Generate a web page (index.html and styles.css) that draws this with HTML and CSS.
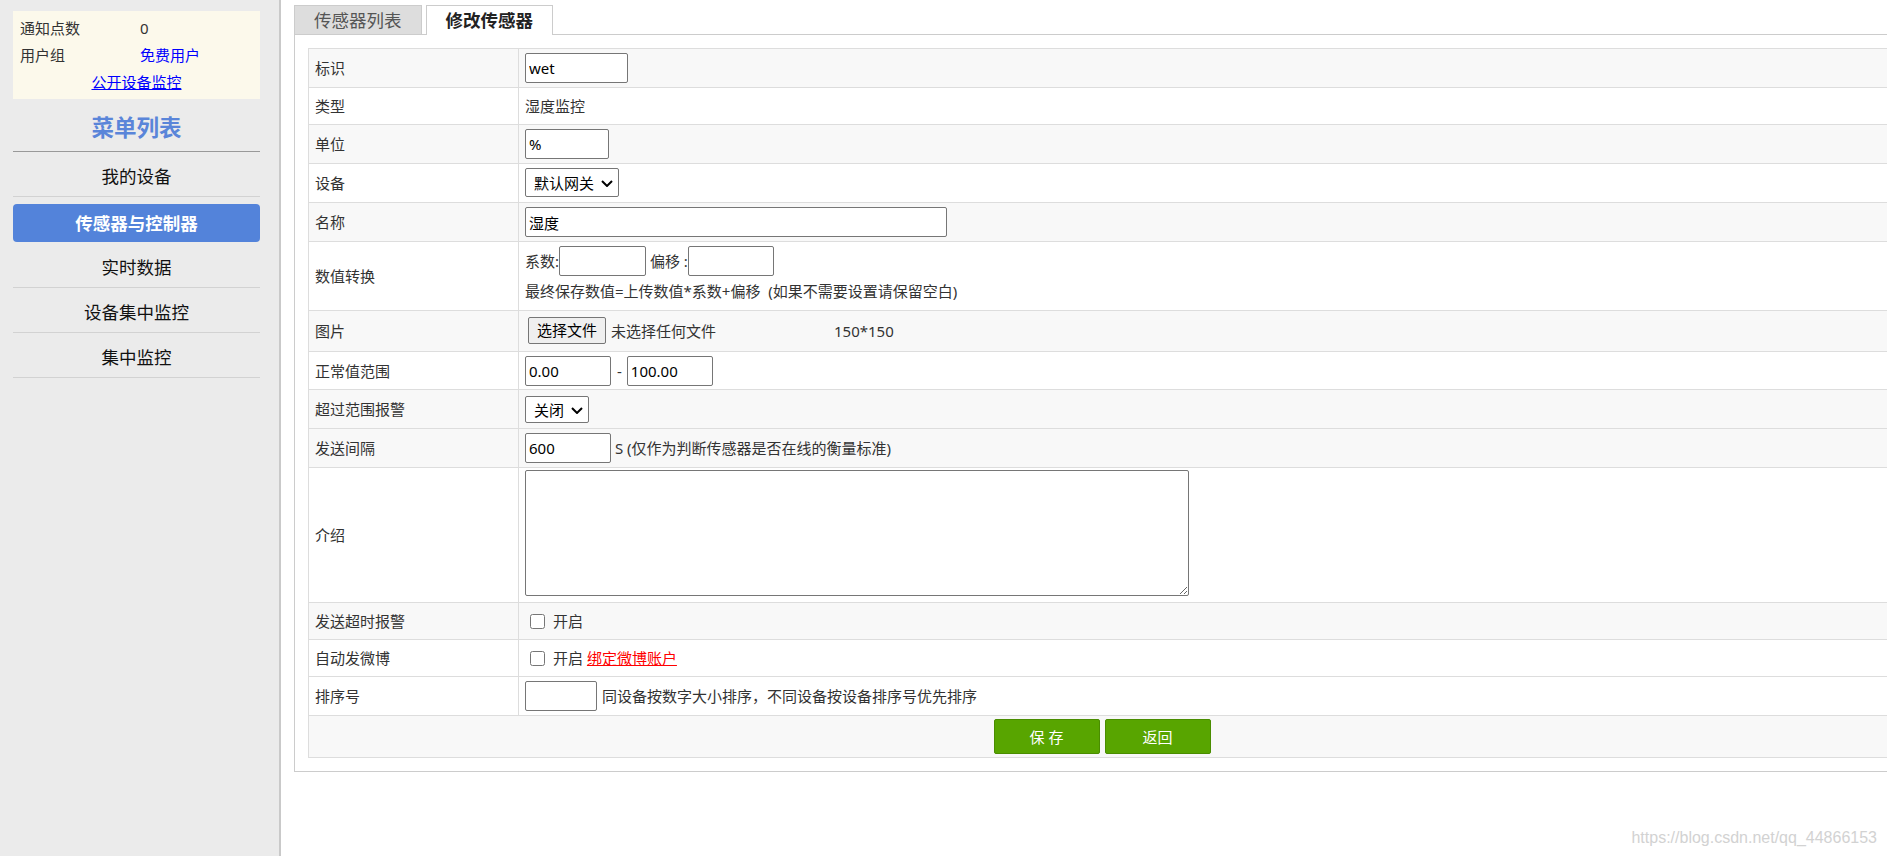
FILE: index.html
```html
<!DOCTYPE html>
<html lang="zh-CN">
<head>
<meta charset="utf-8">
<title>修改传感器</title>
<link rel="stylesheet" href="styles.css">
</head>
<body>
<div class="layout">
  <aside class="sidebar">
    <div class="sb-inner">
      <div class="info">
        <div class="info-row"><span class="info-label">通知点数</span><span class="info-val">0</span></div>
        <div class="info-row"><span class="info-label">用户组</span><span class="info-val blue">免费用户</span></div>
        <div class="info-link"><a href="#">公开设备监控</a></div>
      </div>
      <h2 class="menu-title">菜单列表</h2>
      <ul class="menu">
        <li class="menu-item"><a href="#">我的设备</a></li>
        <li class="menu-item active"><a href="#">传感器与控制器</a></li>
        <li class="menu-item"><a href="#">实时数据</a></li>
        <li class="menu-item"><a href="#">设备集中监控</a></li>
        <li class="menu-item"><a href="#">集中监控</a></li>
      </ul>
    </div>
  </aside>
  <main class="main">
    <div class="tabs">
      <div class="tab">传感器列表</div>
      <div class="tab active">修改传感器</div>
    </div>
    <div class="panel">
      <table class="form">
        <colgroup><col class="c1"><col class="c2"></colgroup>
        <tr class="g"><td>标识</td><td><input class="inp w103" type="text" value="wet"></td></tr>
        <tr class="thin"><td>类型</td><td>湿度监控</td></tr>
        <tr class="g"><td>单位</td><td><input class="inp w84" type="text" value="%"></td></tr>
        <tr><td>设备</td><td><span class="selwrap"><select class="sel w94"><option>默认网关</option></select><svg class="chev" width="12" height="7" viewBox="0 0 12 7"><polyline points="1,1 6,6 11,1" fill="none" stroke="#000" stroke-width="2"/></svg></span></td></tr>
        <tr class="g"><td>名称</td><td><input class="inp w422" type="text" value="湿度"></td></tr>
        <tr><td>数值转换</td><td>
          <div class="line">系数:<input class="inp w87" type="text"> 偏移 :<input class="inp w86" type="text"></div>
          <div class="line">最终保存数值=上传数值*系数+偏移&nbsp; (如果不需要设置请保留空白)</div>
        </td></tr>
        <tr class="g file-row"><td>图片</td><td><button class="filebtn" type="button">选择文件</button><span>未选择任何文件</span><span class="size">150*150</span></td></tr>
        <tr class="range-row"><td>正常值范围</td><td><input class="inp w86" type="text" value="0.00"><span class="dash">-</span><input class="inp w86" type="text" value="100.00"></td></tr>
        <tr class="g"><td>超过范围报警</td><td><span class="selwrap h27"><select class="sel w64"><option>关闭</option></select><svg class="chev" width="12" height="7" viewBox="0 0 12 7"><polyline points="1,1 6,6 11,1" fill="none" stroke="#000" stroke-width="2"/></svg></span></td></tr>
        <tr class="g"><td>发送间隔</td><td><input class="inp w86" type="text" value="600"> S (仅作为判断传感器是否在线的衡量标准)</td></tr>
        <tr class="intro-row"><td>介绍</td><td><textarea class="ta"></textarea></td></tr>
        <tr class="g thin"><td>发送超时报警</td><td><input class="cb" type="checkbox">开启</td></tr>
        <tr class="thin"><td>自动发微博</td><td><input class="cb" type="checkbox">开启 <a class="red" href="#">绑定微博账户</a></td></tr>
        <tr><td>排序号</td><td><input class="inp w72" type="text"><span class="after">同设备按数字大小排序，不同设备按设备排序号优先排序</span></td></tr>
        <tr class="g btn-row"><td colspan="2"><div class="btns"><button class="gbtn" type="button">保 存</button><button class="gbtn" type="button">返回</button></div></td></tr>
      </table>
    </div>
  </main>
</div>
<div class="watermark">https://blog.csdn.net/qq_44866153</div>
</body>
</html>
```
FILE: styles.css
```css
html, body {
  margin: 0;
  padding: 0;
  background: #fff;
  overflow: hidden;
}
body {
  font-family: "Noto Sans", "Noto Sans CJK SC", sans-serif;
  color: #333;
  height: 856px;
  position: relative;
}
.layout {
  display: flex;
  height: 856px;
}
.sidebar {
  width: 279px;
  flex: none;
  background: #ebebeb;
  border-right: 2px solid #c9c9c9;
}
.sb-inner {
  width: 247px;
  margin-left: 13px;
}
.info {
  margin-top: 11px;
  background: #fcf9eb;
  padding: 4px 0 3px 7px;
  font-size: 15px;
  line-height: 27px;
  color: #333;
}
.info-label {
  display: inline-block;
  width: 120px;
}
.blue { color: #0000ff; }
.info-link {
  text-align: center;
  padding-right: 7px;
}
.info-link a { color: #0000ff; text-decoration: underline; }
.menu-title {
  margin: 0;
  padding: 12px 0 6px;
  line-height: 34px;
  font-size: 22.5px;
  font-weight: bold;
  color: #5a85d9;
  text-align: center;
  border-bottom: 1px solid #999;
}
.menu {
  list-style: none;
  margin: 0;
  padding: 0;
}
.menu-item a {
  display: block;
  padding: 5px 0 1px;
  line-height: 38px;
  font-size: 17.5px;
  color: #111;
  text-decoration: none;
  text-align: center;
  border-bottom: 1px solid #d2d2d2;
}
.menu-item.active {
  padding: 7px 0 1px;
}
.menu-item.active a {
  padding: 0;
  border-bottom: 0;
  background: #5383da;
  color: #fff;
  font-weight: bold;
  border-radius: 4px;
}
.main {
  flex: 1;
  min-width: 0;
  overflow: hidden;
  padding-left: 13px;
}
.tabs {
  display: flex;
  align-items: flex-start;
  gap: 4px;
  margin-top: 5px;
}
.tab {
  box-sizing: border-box;
  height: 29px;
  border: 1px solid #ccc;
  border-bottom: 0;
  background: #ddd;
  padding: 0 19px;
  line-height: 28px;
  font-size: 17.5px;
  color: #555;
}
.tab.active {
  height: 30px;
  margin-bottom: -1px;
  background: #fff;
  color: #222;
  font-weight: bold;
  position: relative;
}
.panel {
  box-sizing: border-box;
  width: 1616px;
  border: 1px solid #ccc;
  padding: 13px;
  background: #fff;
}
.form {
  width: 1588px;
  border-collapse: collapse;
  table-layout: fixed;
  font-size: 15px;
  color: #333;
}
.c1 { width: 210px; }
.form td {
  border: 1px solid #ddd;
  padding: 4px 6px;
  line-height: 30px;
  vertical-align: middle;
  white-space: nowrap;
}
.form tr.g td { background: #f8f8f8; }
.form tr.thin td { padding-top: 3px; padding-bottom: 3px; }
.form tr.range-row td { padding-bottom: 3px; }
.form tr.file-row td { padding-top: 5px; padding-bottom: 5px; }
.form tr.intro-row td:last-child { padding-top: 2px; padding-bottom: 6px; }
.form tr.btn-row td { padding-top: 3px; padding-bottom: 3px; }
.inp {
  box-sizing: border-box;
  height: 30px;
  border: 1px solid #767676;
  border-radius: 2px;
  padding: 0 3px;
  margin: 0;
  font-family: "Noto Sans", "Noto Sans CJK SC", sans-serif;
  font-size: 15px;
  color: #000;
  background: #fff;
  vertical-align: top;
}
.w103 { width: 103px; }
.w84 { width: 84px; }
.w422 { width: 422px; }
.w87 { width: 87px; }
.w86 { width: 86px; }
.w72 { width: 72px; }
.dash { margin: 0 5px 0 6px; }
.after { margin-left: 5px; }
.selwrap {
  position: relative;
  display: inline-block;
  height: 29px;
  vertical-align: top;
}
.selwrap.h27 { height: 27px; margin-top: 2px; }
.sel {
  -webkit-appearance: none;
  appearance: none;
  box-sizing: border-box;
  height: 100%;
  border: 1px solid #767676;
  border-radius: 2px;
  padding: 0 0 0 8px;
  margin: 0;
  font-family: "Noto Sans", "Noto Sans CJK SC", sans-serif;
  font-size: 15px;
  color: #000;
  background-color: #fff;
  vertical-align: top;
}
.chev {
  position: absolute;
  right: 6px;
  top: 50%;
  margin-top: -3px;
  pointer-events: none;
}
.w94 { width: 94px; }
.w64 { width: 64px; }
.line { line-height: 30px; height: 30px; }
.filebtn {
  box-sizing: border-box;
  height: 27px;
  border: 1px solid #767676;
  border-radius: 2px;
  background: #efefef;
  padding: 0 8px;
  margin: 1px 5px 0 3px;
  font-family: "Noto Sans", "Noto Sans CJK SC", sans-serif;
  font-size: 15px;
  line-height: 25px;
  color: #000;
  vertical-align: top;
}
.size { margin-left: 118px; }
.ta {
  display: block;
  box-sizing: border-box;
  width: 664px;
  height: 126px;
  border: 1px solid #767676;
  border-radius: 2px;
  margin: 0;
  resize: both;
}
.cb {
  width: 15px;
  height: 15px;
  margin: 8px 8px 0 5px;
  vertical-align: top;
}
.red { color: #ff0000; text-decoration: underline; }
.btns {
  display: flex;
  justify-content: center;
  gap: 5px;
}
.gbtn {
  box-sizing: border-box;
  width: 106px;
  height: 35px;
  background: #58a500;
  border: 1px solid #4a8d00;
  border-radius: 2px;
  color: #fff;
  font-family: "Noto Sans", "Noto Sans CJK SC", sans-serif;
  font-size: 15px;
  padding: 0;
}
.watermark {
  position: absolute;
  right: 10px;
  bottom: 8px;
  font-family: "Liberation Sans", Arial, sans-serif;
  font-size: 16px;
  line-height: 20px;
  color: #d2d2d2;
}
```
